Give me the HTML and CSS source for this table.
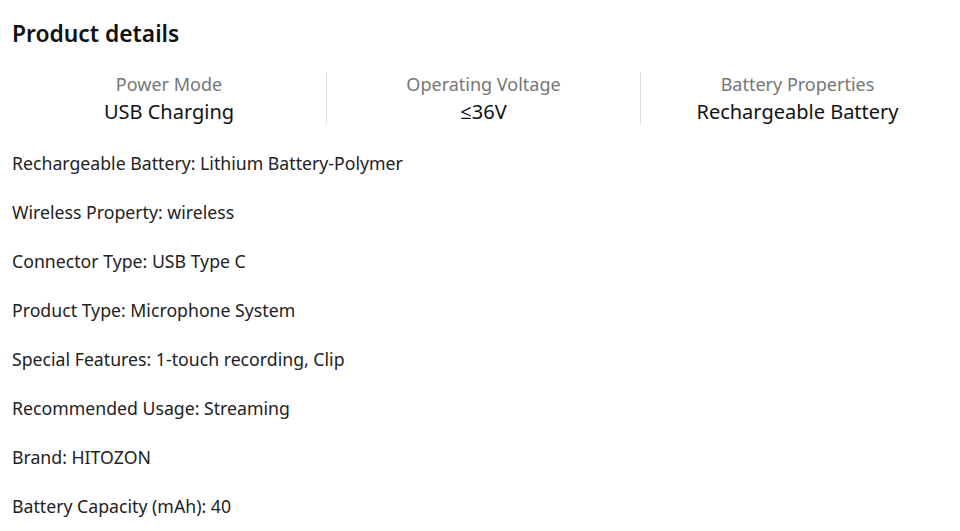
FILE: index.html
```html
<!DOCTYPE html>
<html>
<head>
<meta charset="utf-8">
<link rel="stylesheet" href="styles.css">
</head>
<body>
<div class="page">
  <h2 class="title">Product details</h2>
  <div class="highlights">
    <div class="hl">
      <div class="hl-label">Power Mode</div>
      <div class="hl-value">USB Charging</div>
    </div>
    <div class="hl">
      <div class="hl-label">Operating Voltage</div>
      <div class="hl-value">≤36V</div>
    </div>
    <div class="hl">
      <div class="hl-label">Battery Properties</div>
      <div class="hl-value">Rechargeable Battery</div>
    </div>
  </div>
  <ul class="specs">
    <li>Rechargeable Battery: Lithium Battery-Polymer</li>
    <li>Wireless Property: wireless</li>
    <li>Connector Type: USB Type C</li>
    <li>Product Type: Microphone System</li>
    <li>Special Features: 1-touch recording, Clip</li>
    <li>Recommended Usage: Streaming</li>
    <li>Brand: HITOZON</li>
    <li>Battery Capacity (mAh): 40</li>
  </ul>
</div>
</body>
</html>
```
FILE: styles.css
```css
html, body {
  margin: 0;
  padding: 0;
  background: #fff;
}
body {
  font-family: "Noto Sans", "Open Sans", sans-serif;
  color: #222;
}
.page {
  padding: 18px 6px 0 12px;
}
.title {
  margin: 0;
  font-size: 22.8px;
  font-weight: 600;
  line-height: 32px;
  color: #111;
}
.highlights {
  display: grid;
  grid-template-columns: repeat(3, 314px);
  margin-top: 22px;
}
.hl {
  display: flex;
  flex-direction: column;
  align-items: center;
  height: 52px;
  border-left: 1px solid #ddd;
}
.hl:first-child {
  border-left: none;
}
.hl-label {
  font-size: 18px;
  line-height: 24px;
  color: #767676;
  margin-top: 0;
}
.hl-value {
  font-size: 20px;
  line-height: 28px;
  color: #111;
  margin-top: 2px;
}
.specs {
  list-style: none;
  margin: 27px 0 0;
  padding: 0;
}
.specs li {
  font-size: 17.7px;
  line-height: 25px;
  margin-bottom: 24px;
  color: #222;
}
```
